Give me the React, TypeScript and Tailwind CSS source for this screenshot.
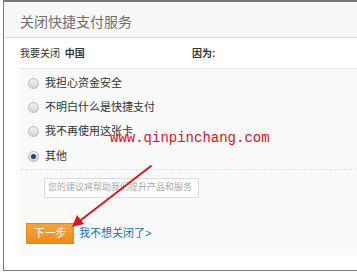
export default function App() {
  const reasons = ['我担心资金安全', '不明白什么是快捷支付', '我不再使用这张卡', '其他']
  const cjk = { fontFamily: '"Liberation Sans", "Noto Sans CJK SC", sans-serif' }

  return (
    <div className="relative w-[357px] h-[272px] overflow-hidden bg-white" style={cjk}>
      <div className="pl-[3px] h-[271px]">
        <div className="h-full border-l border-t-2 border-b border-[#7a7a7a] bg-white flex flex-col">
          {/* Header */}
          <div className="h-[36px] shrink-0 bg-[#f8f8f8] border-b border-[#dedede] flex items-center pl-[16px] pt-[5px]">
            <span className="text-[14px] text-[#707070]">关闭快捷支付服务</span>
          </div>

          {/* Target row */}
          <div className="h-[30px] shrink-0 flex items-center pl-[16px] text-[10px] text-[#333]">
            <span className="w-[172px]">
              我要关闭 <b className="ml-[2px]">中国</b>
            </span>
            <span className="font-bold">因为:</span>
          </div>

          {/* Reason panel */}
          <div className="ml-[16px] h-[187px] shrink-0 bg-[#fafafa] border-t border-[#e6e6e6] flex flex-col">
            <div className="pt-[2px] flex flex-col">
              {reasons.map((r, i) => (
                <div key={r} className="h-[24.3px] flex items-center pl-[8px] gap-[6px]">
                  <span className="w-[11px] h-[11px] rounded-full border border-[#b8b8b8] bg-gradient-to-b from-[#f2f2f2] to-[#d4d4d4] flex items-center justify-center">
                    {i === 3 && <span className="w-[5px] h-[5px] rounded-full bg-[#23407a]" />}
                  </span>
                  <span className="text-[11px] text-[#333]">{r}</span>
                </div>
              ))}
            </div>
            <div className="mt-[1px] border-t border-dashed border-[#e2e2e2]" />
            <div className="mt-[8px] ml-[24px] w-[155px] h-[20px] bg-white border border-[#dcdcdc] flex items-center pl-[3px]">
              <span className="text-[9px] text-[#aaa] whitespace-nowrap">您的建议将帮助我们提升产品和服务</span>
            </div>
            <div className="mt-[25px] ml-[6px] flex items-center gap-[5px]">
              <span className="w-[48px] h-[21px] bg-gradient-to-b from-[#f6a43a] to-[#ec8d14] border border-[#e28a1a] text-white text-[11px] flex items-center justify-center">
                下一步
              </span>
              <span className="text-[11px] text-[#2a6db5]">我不想关闭了&gt;</span>
            </div>
          </div>
        </div>
      </div>

      {/* Watermark */}
      <div
        className="absolute left-[110px] top-[128px] text-[14px] text-[#e6101e] whitespace-nowrap"
        style={{ fontFamily: '"Liberation Mono", monospace' }}
      >
        www.qinpinchang.com
      </div>

      {/* Arrow */}
      <svg className="absolute left-0 top-0" width="357" height="272" viewBox="0 0 357 272">
        <line x1="151" y1="166" x2="81" y2="220" stroke="#e0141e" strokeWidth="2" strokeLinecap="round" />
        <path d="M72 227 L77 215 L84 224 Z" fill="#e0141e" />
      </svg>
    </div>
  )
}
